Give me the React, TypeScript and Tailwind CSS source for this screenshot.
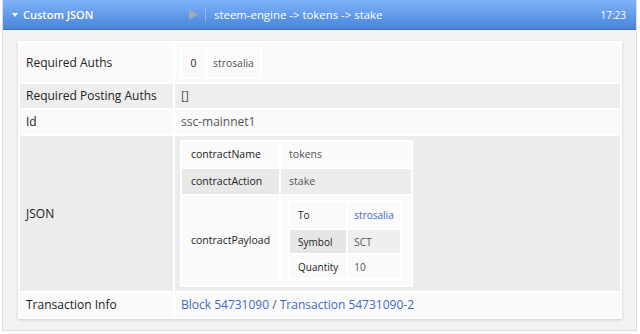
import React from "react";

const font = { fontFamily: '"Open Sans", "Noto Sans", sans-serif' };

function Link({ children }: { children: React.ReactNode }) {
  return <span className="text-[#3d6bc4]">{children}</span>;
}

export default function App() {
  return (
    <div className="w-[640px] h-[334px] bg-white overflow-hidden" style={font}>
      <div className="ml-[2px] w-[635px] h-[331px] border-x border-b border-[#dcdcdc] bg-[#f3f3f3] flex flex-col">
        {/* header */}
        <div className="h-[30px] shrink-0 bg-gradient-to-b from-[#7fb3fa] to-[#4884da] border-b border-[#3c70c2] flex items-center text-white">
          <div className="w-[180px] flex items-center pl-[9px]">
            <svg width="6" height="4" viewBox="0 0 6 4" className="mr-[5px]">
              <path d="M0 0 L6 0 L3 4 Z" fill="#ffffff" />
            </svg>
            <span className="text-[11px] font-semibold leading-none">Custom JSON</span>
          </div>
          <svg width="9" height="11" viewBox="0 0 9 11" className="ml-[6px]">
            <path d="M0 0 L9 5.5 L0 11 Z" fill="#9ea8ba" />
          </svg>
          <div className="ml-[7px] w-px h-[14px] bg-white/30" />
          <span className="ml-[8px] text-[11.4px] leading-none">steem-engine -&gt; tokens -&gt; stake</span>
          <span className="ml-auto mr-[10px] text-[10px] leading-none">17:23</span>
        </div>
        {/* body */}
        <div className="pt-[11px] px-[15px] pr-[14px]">
          <div className="bg-white shadow-[0_1px_3px_rgba(0,0,0,0.15)]">
            <table className="w-full border-separate border-spacing-[2px] text-[12px] leading-4">
              <tbody>
                <tr className="bg-[#fafafa]">
                  <th className="w-[153px] text-left font-medium text-[#222] px-[6px] py-1">Required Auths</th>
                  <td className="px-[5px] pt-1 pb-[3px]">
                    <table className="bg-white border-separate border-spacing-[2px] text-[10.4px]">
                      <tbody>
                        <tr className="bg-[#fafafa] h-[28px]">
                          <th className="font-medium text-[#222] px-0 w-[23px] leading-4">0</th>
                          <td className="text-[#555] px-[6px] leading-4">strosalia</td>
                        </tr>
                      </tbody>
                    </table>
                  </td>
                </tr>
                <tr className="bg-[#eeeeee]">
                  <th className="text-left font-medium text-[#222] px-[6px] py-1">Required Posting Auths</th>
                  <td className="text-[#555] px-[6px] py-1">[]</td>
                </tr>
                <tr className="bg-[#fafafa]">
                  <th className="text-left font-medium text-[#222] px-[6px] py-1">Id</th>
                  <td className="text-[#555] px-[6px] py-1">ssc-mainnet1</td>
                </tr>
                <tr className="bg-[#ececec]">
                  <th className="text-left font-medium text-[#222] px-[6px] py-1">JSON</th>
                  <td className="px-[5px] py-[4px]">
                    <table className="bg-white border-separate border-spacing-[2px] text-[10.5px] leading-[15px]">
                      <tbody>
                        <tr className="bg-[#fafafa]">
                          <th className="w-[93px] text-left font-medium text-[#222] px-[9px] py-[5px]">contractName</th>
                          <td className="w-[130px] text-[#555] px-[8px] py-[5px]">tokens</td>
                        </tr>
                        <tr className="bg-[#ececec]">
                          <th className="text-left font-medium text-[#222] px-[9px] py-[5px] bg-[#e8e8e8]">contractAction</th>
                          <td className="text-[#555] px-[8px] py-[4px]">stake</td>
                        </tr>
                        <tr className="bg-[#fafafa]">
                          <th className="text-left font-medium text-[#222] px-[9px]">contractPayload</th>
                          <td className="pl-[7px] pr-[9px] pt-[4px] pb-[5px]">
                            <table className="bg-white border-separate border-spacing-[2px] text-[10px] leading-[14px]">
                              <tbody>
                                <tr className="bg-[#fafafa]">
                                  <th className="w-[56px] text-left font-medium text-[#222] px-[8px] py-[6px]">To</th>
                                  <td className="w-[52px] px-[6px] py-[6px]">
                                    <Link>strosalia</Link>
                                  </td>
                                </tr>
                                <tr className="bg-[#efefef]">
                                  <th className="text-left font-medium text-[#222] px-[8px] py-[4.5px] bg-[#e6e6e6]">Symbol</th>
                                  <td className="text-[#555] px-[6px] py-[4.5px]">SCT</td>
                                </tr>
                                <tr className="bg-[#fafafa]">
                                  <th className="text-left font-medium text-[#222] px-[8px] py-[4.5px]">Quantity</th>
                                  <td className="text-[#555] px-[6px] py-[4.5px]">10</td>
                                </tr>
                              </tbody>
                            </table>
                          </td>
                        </tr>
                      </tbody>
                    </table>
                  </td>
                </tr>
                <tr className="bg-[#fafafa]">
                  <th className="text-left font-medium text-[#222] px-[6px] py-1">Transaction Info</th>
                  <td className="px-[6px] py-1 text-[#555]">
                    <Link>Block 54731090</Link> / <Link>Transaction 54731090-2</Link>
                  </td>
                </tr>
              </tbody>
            </table>
          </div>
        </div>
      </div>
    </div>
  );
}
